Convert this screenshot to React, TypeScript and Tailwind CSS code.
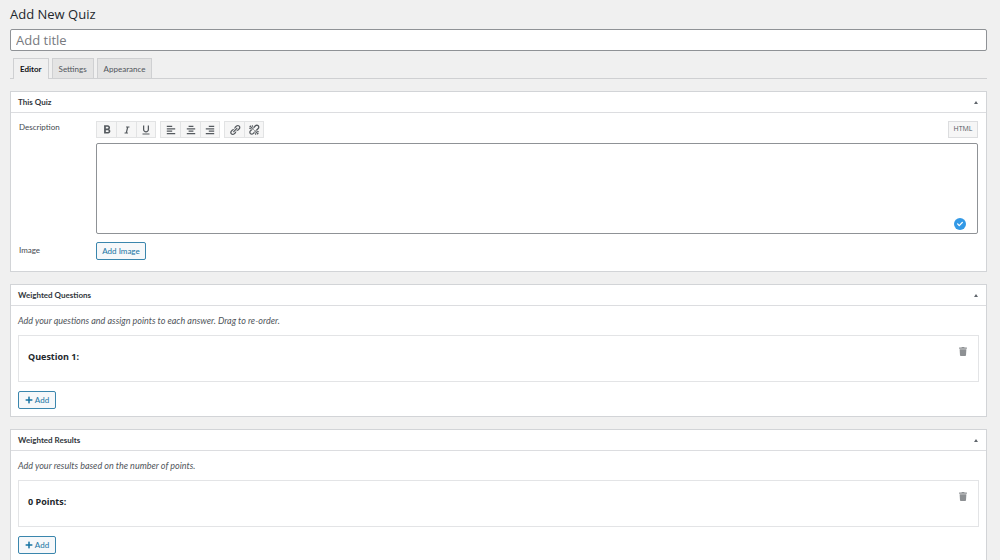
import type { ReactNode } from "react";
import { FaCheck, FaItalic, FaPlus, FaTrash } from "react-icons/fa";
import { MdFormatBold, MdFormatUnderlined } from "react-icons/md";

function Dashicon({ d }: { d: string }) {
  return (
    <svg viewBox="0 0 20 20" className="size-3" fill="currentColor" aria-hidden="true">
      <path d={d} />
    </svg>
  );
}

const ALIGN_LEFT = "M12 5V3H3v2h9zm5 4V7H3v2h14zm-5 4v-2H3v2h9zm5 4v-2H3v2h14z";
const ALIGN_CENTER = "M14 5V3H6v2h8zm3 4V7H3v2h14zm-3 4v-2H6v2h8zm3 4v-2H3v2h14z";
const ALIGN_RIGHT = "M17 5V3H8v2h9zm0 4V7H3v2h14zm0 4v-2H8v2h9zm0 4v-2H3v2h14z";
const LINK =
  "M17.74 2.76c1.68 1.69 1.68 4.41 0 6.1l-1.53 1.52c-1.12 1.12-2.7 1.47-4.14 1.09l2.62-2.61.76-.77.76-.76c.84-.84.84-2.2 0-3.04-.84-.85-2.2-.85-3.04 0l-.77.76-3.38 3.38c-.37-1.44-.02-3.02 1.1-4.14l1.52-1.53c1.69-1.68 4.42-1.68 6.1 0zM8.59 13.43l5.34-5.34c.42-.42.42-1.1 0-1.52-.44-.43-1.13-.39-1.53 0l-5.33 5.34c-.42.42-.42 1.1 0 1.52.44.43 1.13.39 1.52 0zm-.76 2.29l4.14-4.15c.38 1.44.03 3.02-1.09 4.14l-1.52 1.53c-1.69 1.68-4.41 1.68-6.1 0-1.68-1.68-1.68-4.42 0-6.1l1.53-1.52c1.12-1.12 2.7-1.47 4.14-1.1l-4.14 4.15c-.85.84-.85 2.2 0 3.05.84.84 2.2.84 3.04 0z";
const UNLINK =
  "M17.74 2.26c1.68 1.69 1.68 4.41 0 6.1l-1.53 1.52c-.32.33-.69.58-1.08.77L13 10l1.69-1.64.76-.77.76-.76c.84-.84.84-2.2 0-3.04-.84-.85-2.2-.85-3.04 0l-.77.76-.76.76L10 7l-.65-2.14c.19-.38.44-.75.77-1.07l1.52-1.53c1.69-1.68 4.42-1.68 6.1 0zM2 4l8 6-6-8zm4-2l4 8-2-8H6zM2 6l8 4-8-2V6zm7.36 7.69L10 13l.74 2.35-1.38 1.39c-1.69 1.68-4.41 1.68-6.1 0-1.68-1.68-1.68-4.42 0-6.1l1.39-1.38L7 10l-.69.64-1.52 1.53c-.85.84-.85 2.2 0 3.04.84.85 2.2.85 3.04 0zM18 16l-8-6 6 8zm-4 2l-4-8 2 8h2zm4-4l-8-4 8 2v2z";

const TOOL_GROUPS: { label: string; icon: ReactNode }[][] = [
  [
    { label: "Bold", icon: <MdFormatBold className="size-3.5" /> },
    { label: "Italic", icon: <FaItalic className="size-2" /> },
    { label: "Underline", icon: <MdFormatUnderlined className="size-3" /> },
  ],
  [
    { label: "Align left", icon: <Dashicon d={ALIGN_LEFT} /> },
    { label: "Align center", icon: <Dashicon d={ALIGN_CENTER} /> },
    { label: "Align right", icon: <Dashicon d={ALIGN_RIGHT} /> },
  ],
  [
    { label: "Insert link", icon: <Dashicon d={LINK} /> },
    { label: "Remove link", icon: <Dashicon d={UNLINK} /> },
  ],
];

function Panel({ title, children }: { title: string; children: ReactNode }) {
  return (
    <section className="mb-3 border border-[#d2d4d7] bg-white">
      <header className="flex h-[21px] items-center justify-between border-b border-[#dcdde0] pr-2 pl-[7px]">
        <h2 className="font-['Lato',sans-serif] text-[8px] font-bold text-[#32373c]">{title}</h2>
        <button type="button" aria-label={`Toggle ${title}`} className="flex h-4 items-center">
          <svg viewBox="0 0 4 3" className="h-[3px] w-1" fill="#60666c" aria-hidden="true">
            <path d="M2 0 4 3H0z" />
          </svg>
        </button>
      </header>
      {children}
    </section>
  );
}

function ItemPanel({ title, hint, item }: { title: string; hint: string; item: string }) {
  return (
    <Panel title={title}>
      <div className="px-[7px] pt-[9px] pb-[7px]">
        <p className="font-['Lato',sans-serif] text-[9px] leading-3 text-[#50555b] italic">{hint}</p>
        <div className="mt-2 flex h-[47px] items-start justify-between border border-[#e3e4e6] pr-[11px] pl-[9px]">
          <h3 className="pt-[13px] text-[9px] leading-4 font-bold text-[#23282d]">{item}</h3>
          <button type="button" aria-label={`Delete ${item}`} className="pt-[11px] text-[#8d9093]">
            <FaTrash className="h-[9px] w-2" />
          </button>
        </div>
        <button
          type="button"
          className="mt-[9px] flex h-[18px] w-[38px] items-center justify-center gap-0.5 rounded-xs border border-[#3a86ad] bg-[#f6f8fa] font-['Lato',sans-serif] text-[8px] text-[#1673a3]"
        >
          <FaPlus className="size-2" />
          Add
        </button>
      </div>
    </Panel>
  );
}

const TABS = ["Editor", "Settings", "Appearance"];

export default function App() {
  return (
    <main className="h-screen overflow-hidden bg-[#f0f0f0] pr-[13px] pl-2.5 font-['Open_Sans','Noto_Sans',sans-serif]">
      <h1 className="pt-1 pb-[5px] text-[13px] leading-5 text-[#23282d]">Add New Quiz</h1>
      <input
        type="text"
        aria-label="Add title"
        placeholder="Add title"
        className="block h-[22px] w-full rounded-xs border border-[#8f9296] bg-white px-[5px] text-[13px] text-[#32373c] placeholder:text-[#777a7e]"
      />

      <nav
        role="tablist"
        className="mt-[7px] mb-3 flex h-[21px] gap-[3px] border-b border-[#cfd0d2] pl-[3px] font-['Lato',sans-serif]"
      >
        {TABS.map((tab, i) => (
          <button
            key={tab}
            type="button"
            role="tab"
            aria-selected={i === 0}
            className={
              i === 0
                ? "-mb-px border border-b-0 border-[#cfd0d2] bg-[#f0f0f0] px-1.5 text-[8px] font-bold text-[#111315]"
                : "border border-b-0 border-[#cfd0d2] bg-[#e4e4e4] px-1.5 text-[8px] text-[#50555b]"
            }
          >
            {tab}
          </button>
        ))}
      </nav>

      <Panel title="This Quiz">
        <div className="grid grid-cols-[77px_1fr] pt-2 pr-2 pb-[11px] pl-2">
          <label htmlFor="description" className="font-['Lato',sans-serif] text-[8px] leading-3 text-[#444a50]">
            Description
          </label>
          <div>
            <div className="flex justify-between">
              <div className="flex gap-1">
                {TOOL_GROUPS.map((group) => (
                  <div
                    key={group[0].label}
                    className="flex h-[17px] divide-x divide-[#e2e3e4] border border-[#e2e3e4] bg-[#f6f6f6] text-[#555a5f]"
                  >
                    {group.map((tool) => (
                      <button
                        key={tool.label}
                        type="button"
                        aria-label={tool.label}
                        className="flex w-5 items-center justify-center last:w-[18px]"
                      >
                        {tool.icon}
                      </button>
                    ))}
                  </div>
                ))}
              </div>
              <button
                type="button"
                className="h-[17px] w-[30px] border border-[#dcdddf] bg-[#f6f6f6] text-[7px] text-[#555a5f]"
              >
                HTML
              </button>
            </div>
            <div className="relative mt-[5px]">
              <textarea
                id="description"
                className="block h-[91px] w-full resize-none rounded-xs border border-[#8f9296] bg-white p-1 text-[9px] text-[#32373c]"
              />
              <span className="absolute right-3 bottom-1 flex size-3 items-center justify-center rounded-full bg-[#3399e6] text-white">
                <FaCheck className="size-1.5" />
              </span>
            </div>
          </div>
          <span className="mt-2.5 font-['Lato',sans-serif] text-[8px] leading-3 text-[#444a50]">Image</span>
          <button
            type="button"
            className="mt-2 h-[18px] w-[50px] rounded-xs border border-[#3a86ad] bg-[#f6f8fa] font-['Lato',sans-serif] text-[8px] text-[#1673a3]"
          >
            Add Image
          </button>
        </div>
      </Panel>

      <ItemPanel
        title="Weighted Questions"
        hint="Add your questions and assign points to each answer. Drag to re-order."
        item="Question 1:"
      />
      <ItemPanel
        title="Weighted Results"
        hint="Add your results based on the number of points."
        item="0 Points:"
      />
    </main>
  );
}
